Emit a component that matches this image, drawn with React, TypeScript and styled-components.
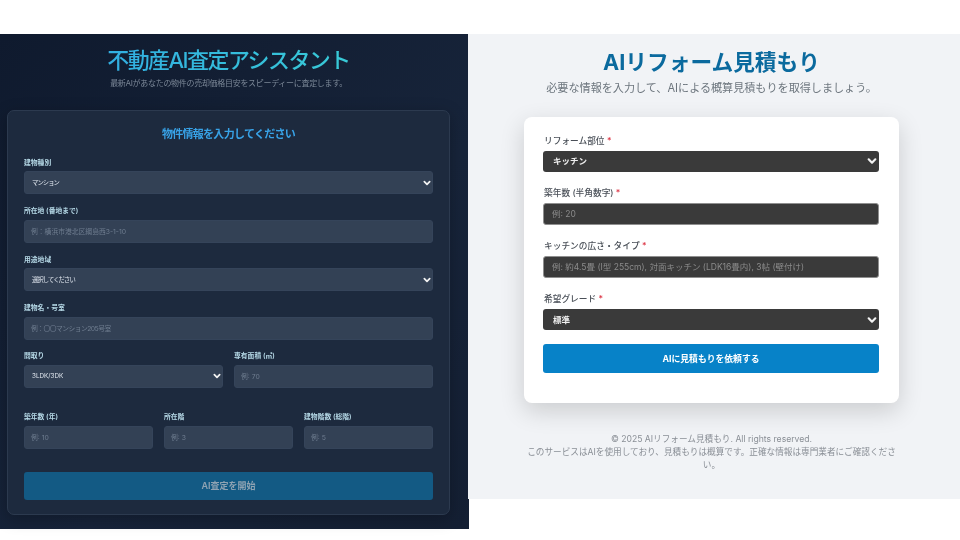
import React from "react";
import styled, { createGlobalStyle } from "styled-components";

const Global = createGlobalStyle`
  html, body { margin: 0; padding: 0; background: #fff; }
  body { font-family: Inter, "Noto Sans CJK JP", sans-serif; }
  * { box-sizing: border-box; }
`;

const chevron = (size: number) => `
  appearance: none;
  background-image: url("data:image/svg+xml,%3Csvg xmlns='http://www.w3.org/2000/svg' viewBox='0 0 12 12'%3E%3Cpath d='M2 4l4 4 4-4' fill='none' stroke='%23f2f2f2' stroke-width='2.6' stroke-linecap='round' stroke-linejoin='round'/%3E%3C/svg%3E");
  background-repeat: no-repeat;
  background-size: ${size}px ${size}px;
`;

const Page = styled.div`
  width: 960px;
  height: 540px;
  padding-top: 34px;
  display: flex;
  align-items: flex-start;
  overflow: hidden;
  filter: blur(0.35px);
`;

/* ---------- left: dark appraisal form ---------- */
const DarkPanel = styled.section`
  width: 469px;
  height: 495px;
  padding: 14px 19px 0 7px;
  background: linear-gradient(135deg, #0f1a2e 0%, #17243a 60%, #141f33 100%);
`;

const DarkHeader = styled.header`
  height: 62px;
  text-align: center;
`;

const DarkTitle = styled.h1`
  margin: 0;
  font-size: 22px;
  line-height: 25px;
  font-weight: 500;
  letter-spacing: -1.55px;
  background: linear-gradient(90deg, #2fa3e6, #3bd6d2);
  -webkit-background-clip: text;
  background-clip: text;
  color: transparent;
`;

const DarkSub = styled.p`
  margin: 4px 0 0;
  font-size: 8px;
  line-height: 12px;
  letter-spacing: -0.3px;
  color: #7b8797;
`;

const DarkCard = styled.div`
  height: 405px;
  padding: 15px 16px 0;
  background: #1d2a3e;
  border: 1px solid #2c3a4f;
  border-radius: 7px;
  box-shadow: 0 4px 16px rgba(0, 0, 0, 0.25);
`;

const DarkCardTitle = styled.h2`
  margin: 0 0 15.5px;
  height: 16px;
  font-size: 11px;
  line-height: 16px;
  font-weight: 600;
  letter-spacing: -0.7px;
  text-align: center;
  color: #38a3e8;
`;

const DarkField = styled.div<{ $gap?: number }>`
  margin-bottom: ${(p) => p.$gap ?? 12.17}px;
  min-width: 0;
`;

const DarkRow = styled.div<{ $cols: number; $gap: number }>`
  display: grid;
  grid-template-columns: repeat(${(p) => p.$cols}, 1fr);
  column-gap: 11px;
  margin-bottom: ${(p) => p.$gap}px;
`;

const DarkLabel = styled.label`
  display: block;
  height: 13.5px;
  font-size: 6.8px;
  line-height: 9px;
  font-weight: 600;
  color: #b5d8e6;
`;

const darkControl = `
  display: block;
  width: 100%;
  height: 23px;
  border-radius: 3px;
  border: 1px solid #35445a;
  background-color: #334155;
  font-family: Inter, "Noto Sans CJK JP", sans-serif;
  outline: none;
`;

const DarkSelect = styled.select<{ $tight?: boolean }>`
  ${darkControl}
  ${chevron(8)}
  background-position: right 1px center;
  padding: 0 7px;
  font-size: 6.3px;
  letter-spacing: ${(p) => (p.$tight ? "-0.9px" : "0")};
  color: #e2e8f0;
`;

const DarkInput = styled.input<{ $tight?: boolean }>`
  ${darkControl}
  padding: 0 6px;
  font-size: 6.8px;
  letter-spacing: ${(p) => (p.$tight ? "-0.55px" : "0")};
  color: #e2e8f0;
  &::placeholder { color: #6f7d90; opacity: 1; }
`;

const DarkButton = styled.button`
  display: block;
  width: 100%;
  height: 28px;
  border: none;
  border-radius: 3px;
  background: #135a84;
  color: #8fa3b3;
  font-family: inherit;
  font-size: 9px;
  font-weight: 600;
`;

/* ---------- right: light reform form ---------- */
const LightPanel = styled.section`
  width: 492px;
  height: 465px;
  margin-left: -1px;
  padding: 15px 61px 0 56px;
  background: #f1f3f6;
`;

const LightHeader = styled.header`
  height: 68px;
  text-align: center;
`;

const LightTitle = styled.h1`
  margin: 0 -40px;
  font-size: 21.7px;
  line-height: 26px;
  font-weight: 700;
  color: #0b6a9e;
`;

const LightSub = styled.p`
  margin: 6px -40px 0;
  font-size: 11.1px;
  line-height: 14px;
  color: #6c757d;
`;

const LightCard = styled.div`
  height: 286px;
  padding: 19px 20px 0 19px;
  background: #fff;
  border-radius: 8px;
  box-shadow: 0 8px 24px rgba(0, 0, 0, 0.16);
`;

const LightField = styled.div`
  margin-bottom: 16px;
`;

const LightLabel = styled.label`
  display: block;
  height: 14.75px;
  padding-left: 1px;
  font-size: 8.7px;
  line-height: 11px;
  font-weight: 500;
  color: #4a5058;
`;

const Required = styled.span`
  color: #dc3545;
`;

const lightControl = `
  display: block;
  width: 100%;
  border-radius: 3px;
  background-color: #3a3a3a;
  font-family: Inter, "Noto Sans CJK JP", sans-serif;
  font-size: 8.5px;
  outline: none;
`;

const LightSelect = styled.select`
  ${lightControl}
  ${chevron(10)}
  background-position: right 2px center;
  height: 21px;
  border: none;
  padding: 0 10px;
  color: #f0f0f0;
  font-weight: 600;
`;

const LightInput = styled.input`
  ${lightControl}
  height: 22.5px;
  padding: 0 8px;
  border: 1px solid #8f8f8f;
  color: #f0f0f0;
  &::placeholder { color: #8b8b8b; opacity: 1; }
`;

const LightButton = styled.button`
  display: block;
  width: 100%;
  height: 29px;
  margin-top: -2px;
  border: none;
  border-radius: 3px;
  background: #0782c8;
  color: #fff;
  font-family: inherit;
  font-size: 8.8px;
  font-weight: 700;
`;

const Footer = styled.footer`
  margin: 30px -1px 0;
  text-align: center;
  font-size: 8.65px;
  line-height: 13px;
  color: #8a8f96;
`;

export default function App() {
  return (
    <Page>
      <Global />
      <DarkPanel>
        <DarkHeader>
          <DarkTitle>不動産AI査定アシスタント</DarkTitle>
          <DarkSub>最新AIがあなたの物件の売却価格目安をスピーディーに査定します。</DarkSub>
        </DarkHeader>
        <DarkCard>
          <DarkCardTitle>物件情報を入力してください</DarkCardTitle>
          <DarkField>
            <DarkLabel>建物種別</DarkLabel>
            <DarkSelect $tight><option>マンション</option></DarkSelect>
          </DarkField>
          <DarkField>
            <DarkLabel>所在地 (番地まで)</DarkLabel>
            <DarkInput placeholder="例：横浜市港北区綱島西3-1-10" />
          </DarkField>
          <DarkField>
            <DarkLabel>用途地域</DarkLabel>
            <DarkSelect $tight><option>選択してください</option></DarkSelect>
          </DarkField>
          <DarkField $gap={11.2}>
            <DarkLabel>建物名・号室</DarkLabel>
            <DarkInput $tight placeholder="例：〇〇マンション205号室" />
          </DarkField>
          <DarkRow $cols={2} $gap={24.5}>
            <div>
              <DarkLabel>間取り</DarkLabel>
              <DarkSelect><option>3LDK/3DK</option></DarkSelect>
            </div>
            <div>
              <DarkLabel>専有面積 (㎡)</DarkLabel>
              <DarkInput placeholder="例: 70" />
            </div>
          </DarkRow>
          <DarkRow $cols={3} $gap={23}>
            <div>
              <DarkLabel>築年数 (年)</DarkLabel>
              <DarkInput placeholder="例: 10" />
            </div>
            <div>
              <DarkLabel>所在階</DarkLabel>
              <DarkInput placeholder="例: 3" />
            </div>
            <div>
              <DarkLabel>建物階数 (総階)</DarkLabel>
              <DarkInput placeholder="例: 5" />
            </div>
          </DarkRow>
          <DarkButton>AI査定を開始</DarkButton>
        </DarkCard>
      </DarkPanel>

      <LightPanel>
        <LightHeader>
          <LightTitle>AIリフォーム見積もり</LightTitle>
          <LightSub>必要な情報を入力して、AIによる概算見積もりを取得しましょう。</LightSub>
        </LightHeader>
        <LightCard>
          <LightField>
            <LightLabel>リフォーム部位 <Required>*</Required></LightLabel>
            <LightSelect><option>キッチン</option></LightSelect>
          </LightField>
          <LightField>
            <LightLabel>築年数 (半角数字) <Required>*</Required></LightLabel>
            <LightInput placeholder="例: 20" />
          </LightField>
          <LightField>
            <LightLabel>キッチンの広さ・タイプ <Required>*</Required></LightLabel>
            <LightInput placeholder="例: 約4.5畳 (I型 255cm), 対面キッチン (LDK16畳内), 3帖 (壁付け)" />
          </LightField>
          <LightField>
            <LightLabel>希望グレード <Required>*</Required></LightLabel>
            <LightSelect><option>標準</option></LightSelect>
          </LightField>
          <LightButton>AIに見積もりを依頼する</LightButton>
        </LightCard>
        <Footer>
          © 2025 AIリフォーム見積もり. All rights reserved.<br />
          このサービスはAIを使用しており、見積もりは概算です。正確な情報は専門業者にご確認ください。
        </Footer>
      </LightPanel>
    </Page>
  );
}
